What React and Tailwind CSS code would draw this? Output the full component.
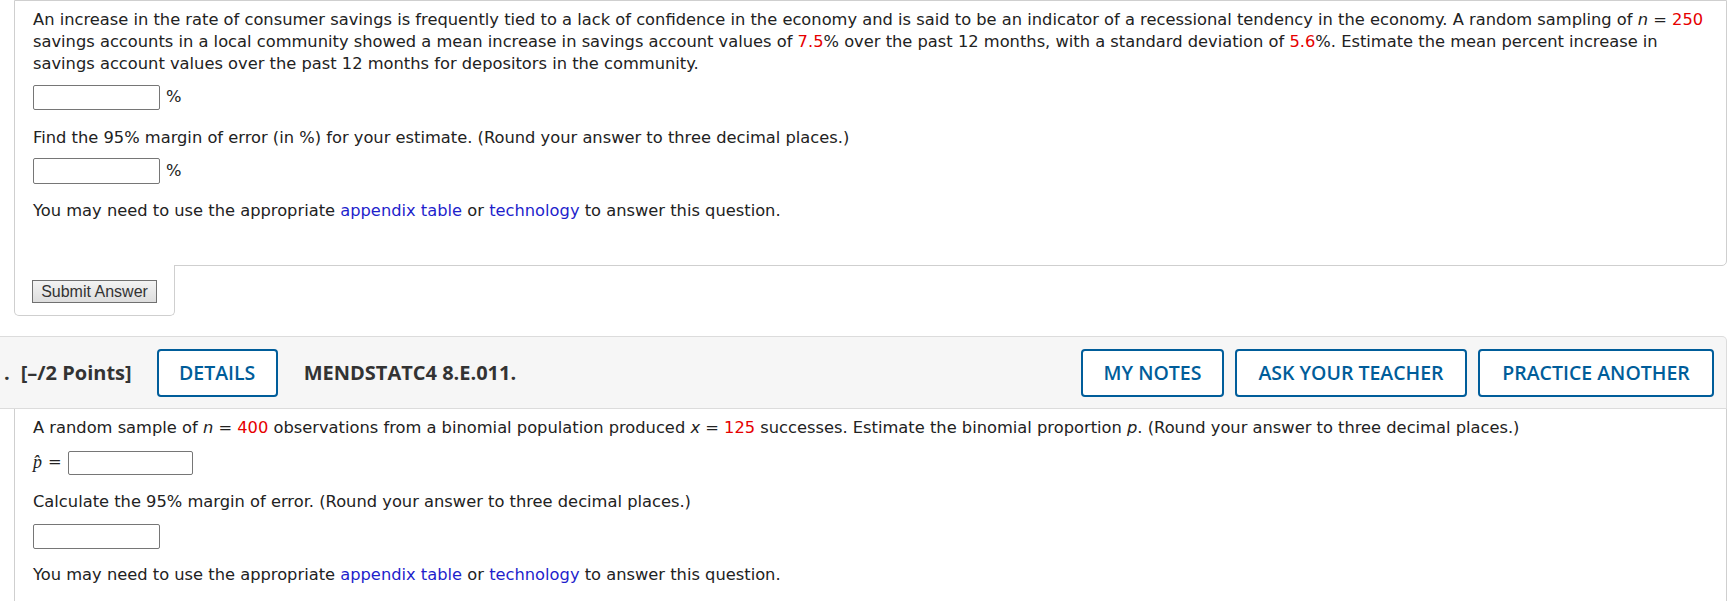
// Two WebAssign-style question blocks

import React from 'react';

const Red = ({ children }) => <span className="text-[#e60000]">{children}</span>;
const Link = ({ children }) => <a className="text-[#1f1fcc] cursor-pointer">{children}</a>;
const Var = ({ children }) => <i>{children}</i>;

function AnswerBox({ width = 'w-[127px]', height = 'h-[25px]' }) {
  return <input type="text" className={`${width} ${height} border border-[#767676] rounded-[2px] bg-white`} />;
}

function HeaderButton({ label, width }) {
  return (
    <button
      className={`${width} h-[48px] border-2 border-[#005d9a] rounded-[4px] text-[#005d9a] text-[19.5px] font-semibold bg-white flex items-center justify-center`}
    >
      {label}
    </button>
  );
}

function AppendixNote() {
  return (
    <p className="leading-[22px]">
      You may need to use the appropriate <Link>appendix table</Link> or <Link>technology</Link> to answer this question.
    </p>
  );
}

export default function App() {
  return (
    <div className="w-[1735px] h-[601px] overflow-hidden bg-white text-[#222] text-[16.3px] font-['DejaVu_Sans',Verdana,sans-serif]">
      {/* Previous question, answer area */}
      <div className="ml-[14px] w-[1713px]">
        <div className="border border-[#cfcfcf] rounded-br-[5px] pl-[18px] pr-4 pt-[8px] pb-[43px]">
          <p className="leading-[22px]">
            An increase in the rate of consumer savings is frequently tied to a lack of confidence in the economy and is said to be an indicator of a recessional tendency in the economy. A random sampling of <Var>n</Var> = <Red>250</Red> savings accounts in a local community showed a mean increase in savings account values of <Red>7.5</Red>% over the past 12 months, with a standard deviation of <Red>5.6</Red>%. Estimate the mean percent increase in savings account values over the past 12 months for depositors in the community.
          </p>
          <div className="mt-[10px] flex items-center gap-[6px]">
            <AnswerBox />
            <span>%</span>
          </div>
          <p className="mt-[17px] leading-[22px]">
            Find the 95% margin of error (in %) for your estimate. (Round your answer to three decimal places.)
          </p>
          <div className="mt-[9px] flex items-center gap-[6px]">
            <AnswerBox height="h-[26px]" />
            <span>%</span>
          </div>
          <div className="mt-[16px]">
            <AppendixNote />
          </div>
        </div>
        <div className="relative -mt-px w-[161px] h-[51px] bg-white border-x border-b border-[#cfcfcf] rounded-b-[5px] pl-[17px] pt-[15px]">
          <button className="w-[125px] h-[23px] border border-[#707070] bg-linear-to-b from-[#f3f3f3] to-[#dddddd] text-[#333] text-[16px] leading-[21px] font-['Liberation_Sans',Arial,sans-serif]">
            Submit Answer
          </button>
        </div>
      </div>

      {/* Next question header */}
      <div className="mt-[20px] w-[1727px] h-[73px] bg-[#f6f6f6] border-t border-r border-b border-[#dcdcdc] rounded-tr-[5px] flex items-center font-['Open_Sans','Noto_Sans',sans-serif] text-[#333]">
        <span className="ml-[4px] text-[20px] font-bold">.</span>
        <span className="ml-[11px] text-[20px] font-bold">[–/2 Points]</span>
        <div className="ml-[25px]">
          <HeaderButton label="DETAILS" width="w-[121px]" />
        </div>
        <span className="ml-[26px] text-[20px] font-bold">MENDSTATC4 8.E.011.</span>
        <div className="ml-auto mr-[12px] flex gap-[11px]">
          <HeaderButton label="MY NOTES" width="w-[143px]" />
          <HeaderButton label="ASK YOUR TEACHER" width="w-[232px]" />
          <HeaderButton label="PRACTICE ANOTHER" width="w-[236px]" />
        </div>
      </div>

      {/* Next question body */}
      <div className="ml-[14px] w-[1713px] h-[200px] border-x border-[#cfcfcf] pl-[18px] pt-[8px]">
        <p className="leading-[22px]">
          A random sample of <Var>n</Var> = <Red>400</Red> observations from a binomial population produced <Var>x</Var> = <Red>125</Red> successes. Estimate the binomial proportion <Var>p</Var>. (Round your answer to three decimal places.)
        </p>
        <div className="mt-[10px] flex items-center gap-[6px]">
          <span className="font-['Liberation_Serif',serif] italic text-[18px]">p̂</span>
          <span>=</span>
          <AnswerBox width="w-[125px]" height="h-[24px]" />
        </div>
        <p className="mt-[15px] leading-[22px]">
          Calculate the 95% margin of error. (Round your answer to three decimal places.)
        </p>
        <div className="mt-[11px]">
          <AnswerBox />
        </div>
        <div className="mt-[15px]">
          <AppendixNote />
        </div>
      </div>
    </div>
  );
}
